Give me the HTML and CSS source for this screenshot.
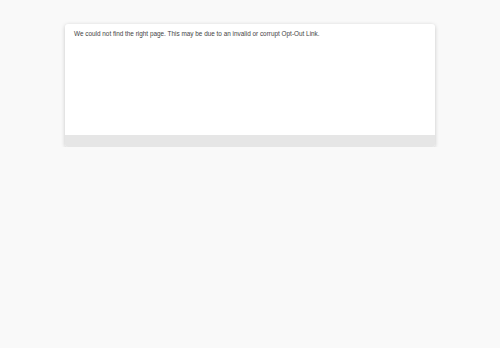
FILE: index.html
```html
<!DOCTYPE html>
<html lang="en">
<head>
  <meta charset="UTF-8">
  <meta name="viewport" content="width=device-width, initial-scale=1">
  <title>Opt-Out</title>
  <link rel="stylesheet" href="styles.css">
</head>
<body>
  <div class="page">
    <div class="card">
      <div class="card-body">
        <p>We could not find the right page. This may be due to an invalid or corrupt Opt-Out Link.</p>
      </div>
      <div class="card-footer"></div>
    </div>
  </div>
</body>
</html>
```

FILE: styles.css
```css
body {
  margin: 0;
  padding: 0;
  background: #f9f9f9;
  font-family: "Liberation Sans", Arial, sans-serif;
  color: #444;
}
.page {
  padding-top: 24px;
}
.card {
  width: 370px;
  margin: 0 auto;
  background: #fff;
  border-radius: 3px;
  box-shadow: 0 1px 4px rgba(0, 0, 0, 0.2);
  overflow: hidden;
}
.card-body {
  height: 111px;
  padding: 0 9px;
  box-sizing: border-box;
}
.card-body p {
  margin: 0;
  padding-top: 6px;
  font-size: 6.4px;
  line-height: 8px;
}
.card-footer {
  height: 12px;
  background: #e6e6e6;
}
```
